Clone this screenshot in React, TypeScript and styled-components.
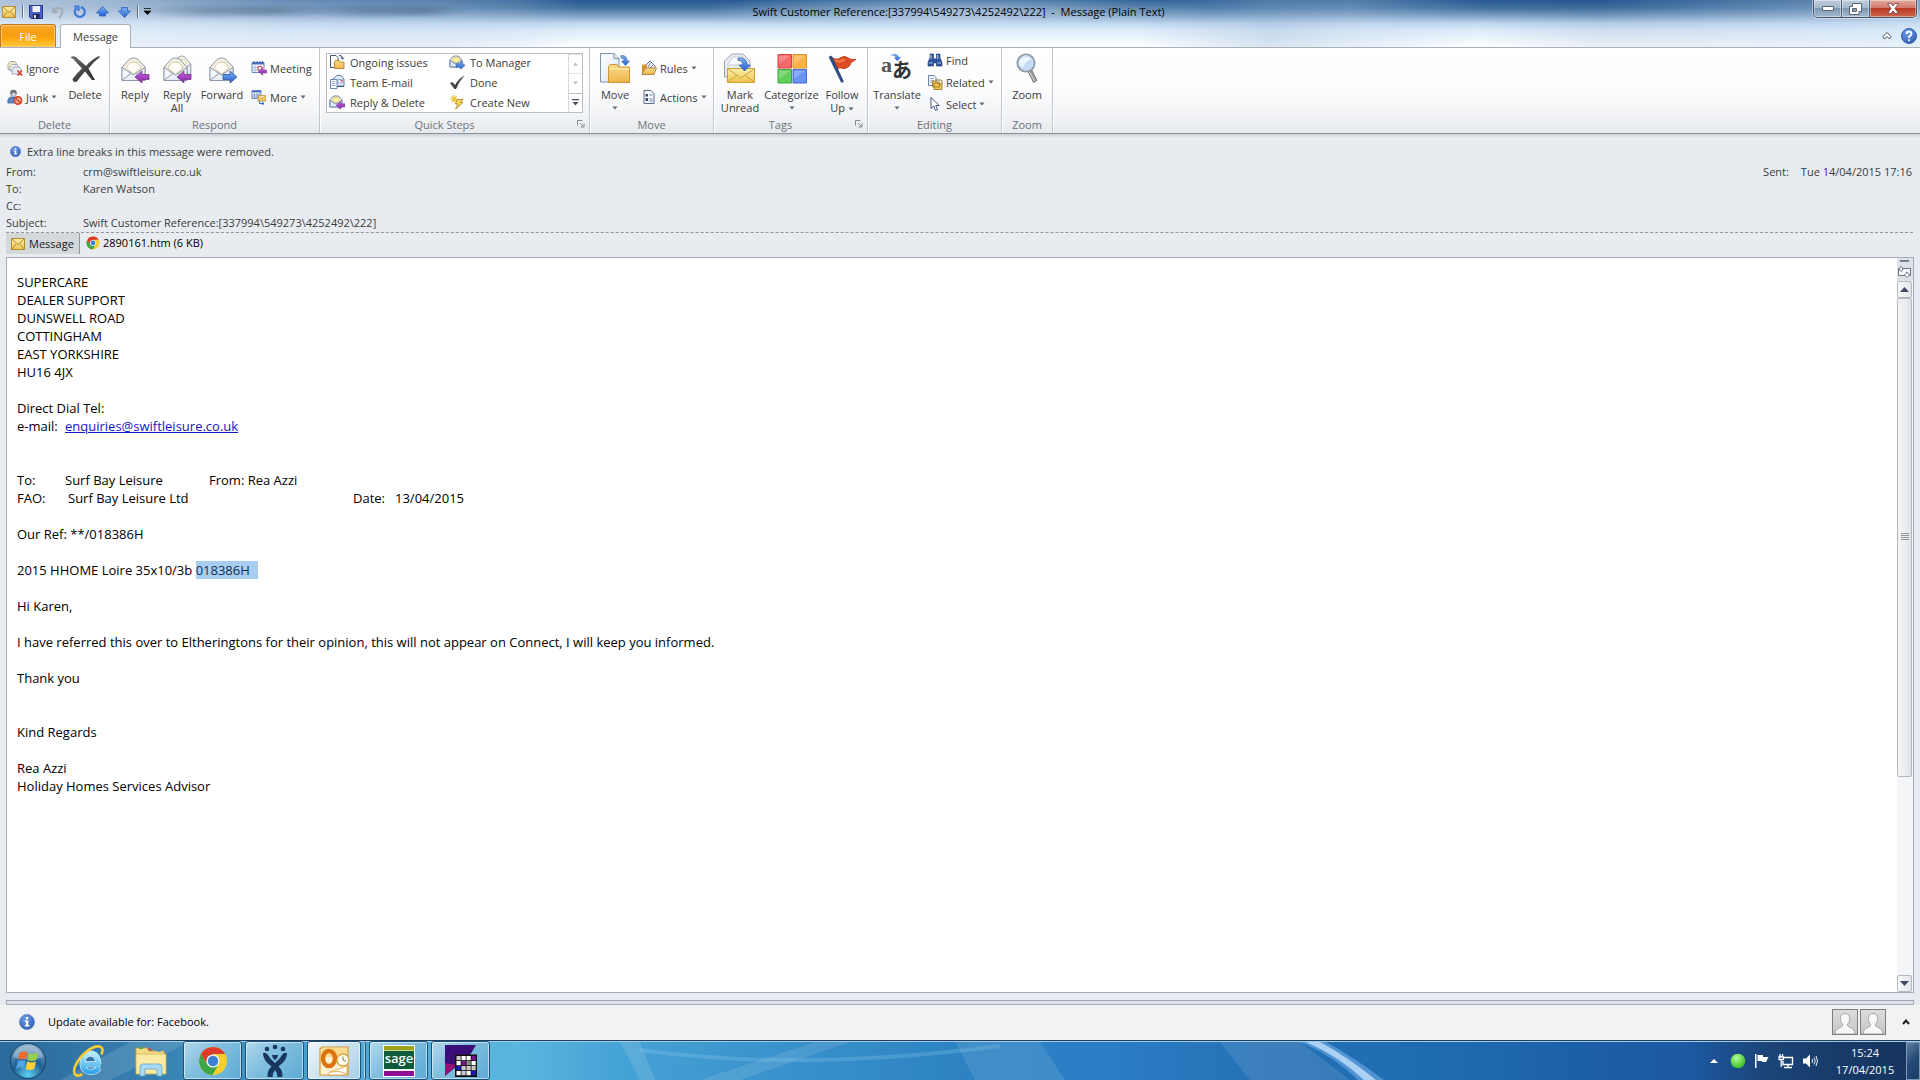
import React from "react";
import styled, { createGlobalStyle } from "styled-components";

const ui = `"Open Sans", "Noto Sans", sans-serif`;

const GlobalStyle = createGlobalStyle`
  *, *::before, *::after { box-sizing: border-box; }
  html, body { margin: 0; padding: 0; background: #e8ecf1; }
  body { font-family: ${ui}; font-size: 11px; line-height: 13px; color: #3b3b3b; }
  button { font: inherit; color: inherit; background: none; border: 0; padding: 0; margin: 0; }
  svg { display: block; flex: none; }
`;

const Screen = styled.div`
  min-height: 100vh;
  display: flex;
  flex-direction: column;
`;

/* ---------- window frame ---------- */

const Frame = styled.header`
  background:
    radial-gradient(ellipse 75px 8px at 215px 11px, rgba(70, 96, 126, 0.4), transparent),
    radial-gradient(ellipse 60px 7px at 275px 11px, rgba(70, 96, 126, 0.4), transparent),
    radial-gradient(ellipse 75px 8px at 375px 11px, rgba(60, 88, 120, 0.4), transparent),
    radial-gradient(ellipse 45px 7px at 425px 11px, rgba(60, 88, 120, 0.35), transparent),
    radial-gradient(ellipse 260px 20px at 958px 11px, rgba(214, 230, 246, 0.6), transparent),
    linear-gradient(90deg, rgba(226, 236, 247, 0.72), rgba(222, 233, 245, 0.62) 120px, rgba(200, 218, 238, 0.4) 280px, rgba(190, 210, 232, 0.32) 450px, rgba(190, 210, 232, 0.2) 520px, transparent 580px, transparent 1140px, rgba(150, 180, 212, 0.35) 1270px, rgba(180, 205, 230, 0.3) 1350px, transparent 1480px, rgba(20, 60, 110, 0.08) 1600px, rgba(200, 220, 240, 0.35) 1840px, rgba(210, 228, 245, 0.5)),
    linear-gradient(180deg, #285a92 0, #42709f 8px, #7fa1c6 16px, #bdd5ee 23px, #dcebfa 30px, #f4f9fe 42px, #ffffff 47px);
`;

const TitleBar = styled.div`
  display: grid;
  grid-template-columns: 1fr auto 1fr;
  height: 24px;
  padding-right: 3px;
`;

const QuickAccess = styled.div`
  display: flex;
  align-items: center;
  gap: 8px;
  padding-left: 2px;
  height: 23px;
`;

const QuickButton = styled.button`
  display: flex;
  align-items: center;
  justify-content: center;
  width: 14px;
  height: 16px;
`;

const Separator = styled.span`
  width: 1px;
  height: 13px;
  margin: 0 -2px;
  background: #5f7183;
  box-shadow: 1px 0 #ffffffaa;
`;

const Title = styled.h1`
  margin: 0;
  font-size: 11px;
  font-weight: 400;
  line-height: 23px;
  color: #000;
  white-space: pre;
`;

const WindowControls = styled.div`
  display: flex;
  justify-self: end;
  height: 18px;
  border: 1px solid #43566c;
  border-top: 0;
  border-radius: 0 0 5px 5px;
  box-shadow: 0 0 0 1px #ffffff70;
  overflow: hidden;
`;

const ControlButton = styled.button<{ $close?: boolean }>`
  display: flex;
  align-items: center;
  justify-content: center;
  width: ${(p) => (p.$close ? 46 : 28)}px;
  border-right: ${(p) => (p.$close ? 0 : 1)}px solid #4c6178;
  box-shadow: inset 0 0 0 1px #ffffff66;
  background: ${(p) =>
    p.$close
      ? "linear-gradient(#e3aba0 0, #d4786a 45%, #bb3a22 50%, #d0664e 100%)"
      : "linear-gradient(#c0cfdf 0, #a3b8cd 45%, #7e98b2 50%, #a5bacf 100%)"};
`;

const TabRow = styled.nav`
  display: flex;
  align-items: flex-end;
  gap: 4px;
  height: 24px;
  border-bottom: 1px solid #aab0b8;
`;

const FileTab = styled.button`
  width: 56px;
  height: 23px;
  border: 1px solid #c8741a;
  border-bottom: 0;
  border-radius: 3px 3px 0 0;
  background: linear-gradient(#f9a92e 0, #f79d10 40%, #fba60d 60%, #ffca3c 100%);
  box-shadow: inset 0 0 0 1px #ffcb6e;
  color: #fff;
`;

const MessageTab = styled.button`
  width: 71px;
  height: 24px;
  margin-bottom: -1px;
  border: 1px solid #aab0b8;
  border-bottom: 0;
  border-radius: 3px 3px 0 0;
  background: #fff;
`;

const TabTools = styled.div`
  display: flex;
  align-items: center;
  gap: 9px;
  height: 23px;
  margin-left: auto;
  padding-right: 3px;
`;

/* ---------- ribbon ---------- */

const Ribbon = styled.section`
  display: flex;
  height: 86px;
  background: linear-gradient(#ffffff 0, #fdfdfe 45%, #f1f3f5 80%, #e7eaee 100%);
  border-bottom: 1px solid #8b9097;
`;

const Group = styled.div<{ $width: number }>`
  display: flex;
  flex-direction: column;
  width: ${(p) => p.$width}px;
  border-right: 1px solid #c3c8ce;
  box-shadow: 1px 0 #ffffff;
`;

const GroupBody = styled.div`
  display: flex;
  flex: 1;
  gap: 2px;
  padding: 3px 0 0 4px;
`;

const LargeSet = styled.div`
  display: flex;
`;

const GroupLabel = styled.div`
  display: flex;
  align-items: center;
  height: 16px;
  margin-bottom: 1px;
  color: #6d747c;
`;

const GroupName = styled.span`
  flex: 1;
  text-align: center;
`;

const LauncherButton = styled.button`
  margin: 0 4px 0 8px;
`;

const LargeButton = styled.button<{ $width: number }>`
  display: flex;
  flex-direction: column;
  align-items: center;
  width: ${(p) => p.$width}px;
  padding-top: 1px;
  white-space: nowrap;
`;

const LargeText = styled.span`
  display: block;
  height: 26px;
  margin-top: 4px;
  text-align: center;
`;

const SmallColumn = styled.div<{ $tight?: boolean }>`
  display: flex;
  flex-direction: column;
  gap: ${(p) => (p.$tight ? 4 : 11)}px;
  padding-top: ${(p) => (p.$tight ? 0 : 8)}px;
  min-width: 60px;
`;

const SmallButton = styled.button`
  display: flex;
  align-items: center;
  gap: 3px;
  height: 18px;
  padding-left: 3px;
  white-space: nowrap;
`;

const Gallery = styled.div`
  display: flex;
  width: 257px;
  height: 60px;
  margin: 2px 0 0 2px;
  border: 1px solid #b9bec4;
  background: #fff;
`;

const GalleryGrid = styled.div`
  display: grid;
  grid-template-columns: 120px 1fr;
  grid-template-rows: repeat(3, 20px);
  flex: 1;
  height: 58px;
`;

const GalleryButton = styled.button`
  display: flex;
  align-items: center;
  gap: 5px;
  padding-left: 2px;
  height: 16px;
  white-space: nowrap;
`;

const GalleryScroll = styled.div`
  display: flex;
  flex-direction: column;
  width: 14px;
  border-left: 1px solid #d5d9dd;
`;

const GalleryArrow = styled.button<{ $active?: boolean }>`
  display: flex;
  flex: 1;
  align-items: center;
  justify-content: center;
  color: ${(p) => (p.$active ? "#4b5158" : "#b8bcc1")};
  border-top: 1px solid ${(p) => (p.$active ? "#b9bec4" : "#e4e6e9")};
`;

/* ---------- message header ---------- */

const MessagePane = styled.main`
  display: flex;
  flex: 1;
  flex-direction: column;
  padding: 0 6px;
  background: linear-gradient(#cdd2d8 0, #e8ecf1 4px);
`;

const InfoLine = styled.p`
  display: flex;
  align-items: center;
  gap: 6px;
  height: 20px;
  margin: 7px 0 2px;
  padding-left: 4px;
`;

const HeaderRow = styled.div`
  display: flex;
  align-items: center;
  height: 17px;
`;

const HeaderName = styled.span`
  width: 77px;
`;

const SentInfo = styled.span`
  display: flex;
  gap: 12px;
  margin-left: auto;
  padding-right: 2px;
`;

const AttachmentBar = styled.div`
  display: flex;
  align-items: flex-start;
  height: 25px;
  margin: 1px 1px 0 0;
  border-top: 1px dashed #8e959d;
  color: #16181b;
`;

const MessageChip = styled.button`
  display: flex;
  align-items: center;
  gap: 4px;
  width: 74px;
  height: 21px;
  padding-left: 5px;
  border-right: 1px solid #8e959d;
  background: #d3d8db;
`;

const FileChip = styled.button`
  display: flex;
  align-items: center;
  gap: 3px;
  height: 19px;
  padding-left: 6px;
  color: #000;
`;

const Viewer = styled.section`
  display: flex;
  flex: 1;
  border: 1px solid #a3abb8;
  background: #fff;
`;

const Mail = styled.article`
  flex: 1;
  padding: 15px 10px 20px;
  font-size: 13px;
  line-height: 18px;
  color: #000;
`;

const Line = styled.p`
  display: flex;
  height: 18px;
  margin: 0;
  white-space: pre;
`;

const Cell = styled.span<{ $width: number }>`
  width: ${(p) => p.$width}px;
`;

const MailLink = styled.a`
  color: #1414c8;
  text-decoration: underline;
`;

const Selected = styled.mark`
  height: 18px;
  padding-right: 8px;
  background: #a9cdf1;
  color: #12304f;
`;

const ScrollBar = styled.div`
  display: flex;
  flex-direction: column;
  width: 16px;
  background: #f4f5f6;
`;

const ScrollTools = styled.div`
  display: flex;
  flex-direction: column;
  align-items: center;
  gap: 4px;
  height: 23px;
  padding: 2px 1px 0 0;
  background: #dde2e8;
`;

const SplitHandle = styled.span`
  width: 9px;
  height: 2px;
  background: #77808a;
`;

const ScrollButton = styled.button`
  display: flex;
  align-items: center;
  justify-content: center;
  width: 15px;
  height: 17px;
  border: 1px solid #b4b9c0;
  border-radius: 2px;
  background: linear-gradient(90deg, #f8f9fa, #e4e7ea);
`;

const ScrollTrack = styled.div`
  display: flex;
  flex: 1;
  flex-direction: column;
`;

const ScrollThumb = styled.div`
  display: flex;
  flex: 478;
  align-items: center;
  justify-content: center;
  width: 15px;
  border: 1px solid #b4b9c0;
  border-radius: 2px;
  background: linear-gradient(90deg, #f3f3f3, #eeeeee 50%, #dfe2e5);
`;

const ScrollRest = styled.div`
  flex: 199;
`;

const PeopleSplitter = styled.div`
  height: 5px;
  margin-top: 7px;
  border: 1px solid #a3abb8;
  background: #dfe3e9;
`;

const StatusBar = styled.footer`
  display: flex;
  align-items: center;
  height: 35px;
  padding: 0 10px 2px 19px;
  background: #f0f2f4;
  color: #000;
`;

const StatusText = styled.span`
  margin-left: 13px;
`;

const People = styled.div`
  display: flex;
  align-items: center;
  gap: 2px;
  margin-left: auto;
`;

const Avatar = styled.button`
  width: 26px;
  height: 26px;
  border: 1px solid #7d7d7d;
  background: linear-gradient(#dcdcdc, #c6c6c6);
`;

const ExpandButton = styled.button`
  margin-left: 14px;
`;

/* ---------- taskbar ---------- */

const Taskbar = styled.footer`
  position: relative;
  display: flex;
  height: 40px;
  border-top: 1px solid #1d3f60;
  background: linear-gradient(90deg, #2b6a9b 0, #3680b0 8%, #4aa5d2 17%, #5ab5df 27%, #46a3d5 32%, #3a93cc 40%, #2d83c2 50%, #2a7cc4 58%, #2571b5 66%, #1f6bb2 75%, #1c5fa6 83%, #1c59a2 88%, #1c4478 92%, #173a68 96%, #16335c 100%);
  box-shadow: inset 0 1px #a5cce6;
`;

const Wallpaper = styled.svg`
  position: absolute;
  inset: 1px 0 0 0;
  width: 100%;
  height: 38px;
`;

const Launchers = styled.nav`
  position: relative;
  display: flex;
  gap: 3px;
`;

const Launcher = styled.button<{ $open?: boolean; $active?: boolean }>`
  display: flex;
  align-items: center;
  justify-content: center;
  width: 59px;
  height: 39px;
  border-radius: 3px;
  border: 1px solid ${(p) => (p.$open ? "#1e4f75" : "transparent")};
  box-shadow: ${(p) => (p.$open ? "inset 0 0 0 1px #ffffff88" : "none")};
  background: ${(p) =>
    p.$active
      ? "linear-gradient(135deg, #f2f8fc 0, #cfe4f1 45%, #a5cfe8 100%)"
      : p.$open
        ? "linear-gradient(135deg, #b4d9ec 0, #83bfdf 40%, #5cabd6 100%)"
        : "none"};
`;

const StartButton = styled(Launcher)`
  width: 56px;
`;

const Stack = styled.div`
  display: flex;
  width: 59px;
  border-right: 1px solid #1e4f75;
  border-radius: 3px;
  box-shadow: inset -1px 0 #ffffff88;

  ${Launcher} { width: 54px; }
`;

const Tray = styled.div`
  position: relative;
  display: flex;
  align-items: center;
  gap: 8px;
  margin-left: auto;
`;

const TrayButton = styled.button`
  display: flex;
  align-items: center;
  justify-content: center;
  width: 16px;
  height: 18px;
`;

const Clock = styled.time`
  width: 66px;
  margin-left: 6px;
  text-align: center;
  line-height: 17px;
  color: #fff;
`;

const ShowDesktop = styled.button`
  width: 14px;
  height: 38px;
  border: 1px solid #7d99b8;
  background: linear-gradient(135deg, #5f7d9e, #234a75 50%, #1c3e68);
`;

/* ---------- drawings ---------- */

const Defs = styled.svg`
  position: absolute;
  width: 0;
  height: 0;
`;

const Gradients = () => (
  <Defs aria-hidden="true">
    <defs>
      <linearGradient id="paper" x1="0" y1="0" x2="1" y2="1">
        <stop offset="0" stopColor="#ffffff" /><stop offset="1" stopColor="#dbe5f1" />
      </linearGradient>
      <linearGradient id="flap" x1="0" y1="0" x2="0" y2="1">
        <stop offset="0" stopColor="#f4f1e4" /><stop offset="1" stopColor="#e3e0d0" />
      </linearGradient>
      <linearGradient id="gold" x1="0" y1="0" x2="0" y2="1">
        <stop offset="0" stopColor="#fdf0a8" /><stop offset="1" stopColor="#eec14e" />
      </linearGradient>
      <linearGradient id="folder" x1="0" y1="0" x2="0" y2="1">
        <stop offset="0" stopColor="#fbdc8c" /><stop offset="1" stopColor="#eeb54a" />
      </linearGradient>
      <linearGradient id="blue" x1="0" y1="0" x2="0" y2="1">
        <stop offset="0" stopColor="#7db0f2" /><stop offset="1" stopColor="#2761cf" />
      </linearGradient>
      <linearGradient id="purple" x1="0" y1="0" x2="0" y2="1">
        <stop offset="0" stopColor="#c36ad8" /><stop offset="1" stopColor="#8a1fa8" />
      </linearGradient>
      <linearGradient id="ink" x1="0" y1="0" x2="1" y2="1">
        <stop offset="0" stopColor="#6a6a6a" /><stop offset="1" stopColor="#222222" />
      </linearGradient>
      <radialGradient id="info" cx="0.4" cy="0.3" r="0.8">
        <stop offset="0" stopColor="#6fa0ea" /><stop offset="1" stopColor="#2a57b0" />
      </radialGradient>
      <radialGradient id="orb" cx="0.5" cy="0.9" r="0.9">
        <stop offset="0" stopColor="#5fd0f5" /><stop offset="0.5" stopColor="#1e5e92" /><stop offset="1" stopColor="#8fb4cf" />
      </radialGradient>
      <radialGradient id="green" cx="0.4" cy="0.3" r="0.7">
        <stop offset="0" stopColor="#b5ff9a" /><stop offset="1" stopColor="#35bd1c" />
      </radialGradient>
      <linearGradient id="ie" x1="0" y1="0" x2="0" y2="1">
        <stop offset="0" stopColor="#b8ecfd" /><stop offset="1" stopColor="#35a6e8" />
      </linearGradient>
    </defs>
  </Defs>
);

const Caret = () => (
  <svg width="6" height="4" viewBox="0 0 6 4"><path d="M0.5 0.5h5L3 3.5z" fill="#63686e" /></svg>
);

const InlineCaretBox = styled.span`
  display: inline-block;
  vertical-align: middle;
  margin-left: 3px;
`;

const CaretLine = styled.span`
  display: flex;
  align-items: center;
  justify-content: center;
  height: 13px;
`;

const EnvelopeShape = () => (
  <g stroke="#8d98a8" strokeWidth="1" strokeLinejoin="round">
    <path d="M1 10 8 2.500Q12.500-.8 17 2.500L24 10V23.500H1z" fill="url(#flap)" />
    <path d="M5 11 9 5.500h7L20 11l-7.500 6z" fill="#fffef6" stroke="#d5cfae" />
    <path d="M1 10.500 12.500 18 24 10.500V23.500H1z" fill="url(#paper)" />
    <path d="M1.500 23 10 16.500M23.500 23 15 16.500" fill="none" />
  </g>
);

const ArrowLeft = () => <path d="M0 6 7 0v3.500h7v5H7V12z" fill="url(#purple)" stroke="#6f2787" strokeWidth=".7" />;
const ArrowRight = () => <path d="M14 6 7 0v3.500H0v5h7V12z" fill="url(#blue)" stroke="#20509f" strokeWidth=".7" />;

const ReplyIcon = () => (
  <svg width="32" height="32" viewBox="0 0 32 32">
    <g transform="translate(2 5)"><EnvelopeShape /></g>
    <g transform="translate(16 19)"><ArrowLeft /></g>
  </svg>
);

const ReplyAllIcon = () => (
  <svg width="32" height="32" viewBox="0 0 32 32">
    <g transform="translate(11 3) scale(.78 .9)"><EnvelopeShape /></g>
    <g transform="translate(2 5)"><EnvelopeShape /></g>
    <g transform="translate(16 19)"><ArrowLeft /></g>
  </svg>
);

const ForwardIcon = () => (
  <svg width="32" height="32" viewBox="0 0 32 32">
    <g transform="translate(3 5)"><EnvelopeShape /></g>
    <g transform="translate(17 19)"><ArrowRight /></g>
  </svg>
);

const DeleteIcon = () => (
  <svg width="32" height="32" viewBox="0 0 32 32">
    <path d="M2 5Q6 3 9 7L17 14Q23 7 30 4L31 5Q24 10 19.500 16.500L26 28H23L16 19.500Q11 25 8 29.500Q4 31 3.500 27Q8 21 13 16.500L6 9Q5 6.500 2 6z" fill="url(#ink)" />
  </svg>
);

const MoveIcon = () => (
  <svg width="32" height="32" viewBox="0 0 32 32">
    <path d="M1.500 1.500H15l5 5V30H1.500z" fill="url(#paper)" stroke="#7d93b3" />
    <path d="M15 1.500v5h5" fill="#e5ecf5" stroke="#7d93b3" />
    <path d="M22 3.500Q28 3 28 9h2.500L26.500 13.500 22.500 9H25Q25.500 6 22 6z" fill="url(#blue)" stroke="#2b5aa8" strokeWidth=".6" />
    <path d="M9.500 14.500 11 12.500h7l1.500 2.500H30.500V30.500H9.500z" fill="url(#folder)" stroke="#d09436" />
    <path d="M10 17h20" stroke="#fff0be" />
  </svg>
);

const MarkUnreadIcon = () => (
  <svg width="32" height="32" viewBox="0 0 32 32">
    <path d="M.5 13V9L8 2h11l7 7v8H.5z" fill="#e9edf1" stroke="#9aa3b0" />
    <path d="M.5 12v13h5" fill="#dfe6ee" stroke="#9aa3b0" />
    <path d="M3 13 9 5h10l5 8z" fill="#fafbfc" stroke="#c5cbd3" />
    <path d="M3.500 16.500h27v14h-27z" fill="url(#gold)" stroke="#c9a23c" />
    <path d="M4 17 17 26 30 17M4 30l9-7M30 30l-9-7" fill="none" stroke="#c9a23c" />
    <path d="M14 6Q23 5 23 13h3.500L20.500 19 15 13H18.500Q19 8.500 14 8.500z" fill="url(#blue)" stroke="#2b5aa8" strokeWidth=".7" />
  </svg>
);

const CategorizeIcon = () => (
  <svg width="32" height="32" viewBox="0 0 32 32">
    <path d="M2 2.500h13.500V16H2z" fill="#f4686a" stroke="#d94042" />
    <path d="M17 2.500h13.500V16H17z" fill="#fbb347" stroke="#e0922a" />
    <path d="M2 17.500h13.500V31H2z" fill="#62cf5b" stroke="#3aa838" />
    <path d="M17 17.500h13.500V31H17z" fill="#6a94f5" stroke="#3e68d0" />
    <path d="M3 3.500h11.500L3 12zM18 3.500h11.500L18 12zM3 18.500h11.500L3 27zM18 18.500h11.500L18 27z" fill="#fff" opacity=".22" />
  </svg>
);

const FlagIcon = () => (
  <svg width="32" height="32" viewBox="0 0 32 32">
    <path d="M5 5Q10 9 15 5.500Q19 3 22 6Q25 8 30 7.500Q24 10 23.500 14Q19 18 15 16Q12 15 11.500 19z" fill="#e04a24" stroke="#b52f12" strokeWidth=".8" />
    <path d="M8 7Q13 10 17 6.500L20 8Q15 12 10 10z" fill="#f58b5c" opacity=".7" />
    <path d="M3 5 15.500 30.500 17.500 29.500 5.500 4z" fill="#2c4d8a" stroke="#1d3564" strokeWidth=".6" />
  </svg>
);

const TranslateIcon = () => (
  <svg width="32" height="32" viewBox="0 0 32 32">
    <text x="0" y="20" fontFamily="Liberation Serif, serif" fontWeight="700" fontSize="22" fill="#555">a</text>
    <text x="11" y="26" fontFamily="Noto Sans CJK JP, sans-serif" fontWeight="700" fontSize="20" fill="#333">あ</text>
    <path d="M9 4Q15-1 18 5h2L16.500 9 12.500 5.500h2.500Q13 2.500 9 4z" fill="url(#blue)" />
  </svg>
);

const ZoomIcon = () => (
  <svg width="32" height="32" viewBox="0 0 32 32">
    <path d="M16.500 18.500 20 16.500 26 28.500 22.500 30.500z" fill="#9a9a9a" stroke="#707070" strokeWidth=".8" />
    <path d="M18 19 23.500 29" stroke="#dcdcdc" strokeWidth="1" />
    <circle cx="15" cy="11" r="8.700" fill="#c5dbf3" stroke="#8c97a5" strokeWidth="1.600" />
    <path d="M8.500 11a6.500 6.500 0 0 1 12-3.500Q15 8 12 15.500 8.500 14 8.500 11z" fill="#eef6fd" />
  </svg>
);

const SmallEnvelope = () => (
  <g strokeLinejoin="round">
    <path d="M1 6 4.500 2h5L13 6v7H1z" fill="#f4edc8" stroke="#5c7fae" strokeWidth=".9" />
    <path d="M3.500 6 5 3.500h4L10.500 6 7 8.500z" fill="#fff4a8" stroke="#d8b850" strokeWidth=".6" />
    <path d="M1 6.500 7 10 13 6.500V13H1z" fill="#dce9f8" stroke="#5c7fae" strokeWidth=".9" />
  </g>
);

const S = ({ children }: { children: React.ReactNode }) => (
  <svg width="16" height="16" viewBox="0 0 16 16">{children}</svg>
);

const IgnoreIcon = () => (
  <S>
    <path d="M1 4.500 3 1.500h5l2 3v5H1z" fill="#f6ecc0" stroke="#8f99a8" strokeWidth=".8" />
    <path d="M3 7 5 4.500h5l2 2.500v4H3z" fill="#f0f2f5" stroke="#8f99a8" strokeWidth=".8" />
    <path d="M5 9 7 7h5l2 2v5H5z" fill="#e6ebf2" stroke="#8f99a8" strokeWidth=".8" />
    <path d="M10.500 10.500 15 15.500M15 10.500l-4.500 5" stroke="#dc4030" strokeWidth="1.700" />
  </S>
);
const JunkIcon = () => (
  <S>
    <circle cx="6.500" cy="4" r="3.300" fill="#6a6f78" />
    <path d="M4.500 5Q7 2 9 5.500Q8 8 6.500 8 5 8 4.500 5z" fill="#cfd5de" />
    <path d="M.8 14Q.500 8.500 4 8h5Q11 9 11 14z" fill="#5c86c4" stroke="#31568f" strokeWidth=".7" />
    <circle cx="11" cy="11.500" r="3.600" fill="#f3b7a4" stroke="#dc4322" strokeWidth="1.700" />
    <path d="M8.600 9 13.400 14" stroke="#dc4322" strokeWidth="1.600" />
  </S>
);
const MeetingIcon = () => (
  <S>
    <path d="M1 2.500h12v10H1z" fill="#fff" stroke="#6b87c0" />
    <path d="M1 2.500h12v2H1z" fill="#4c74c8" />
    <path d="M3 1v2.500M6 1v2.500M9 1v2.500M11.500 1v2.500" stroke="#36559b" />
    <path d="M4 5v7M7 5v7M10 5v7M1 7.500h12M1 10h12" stroke="#8fa8d8" strokeWidth=".8" />
    <path d="M7 6.500h3.500V10H7z" fill="#fff" stroke="#d84a4a" />
    <g transform="translate(7.500 8) scale(.6)"><ArrowLeft /></g>
  </S>
);
const MoreIcon = () => (
  <S>
    <path d="M1 1.500h9v8H1z" fill="#fff" stroke="#6b87c0" />
    <path d="M1 1.500h9v2H1z" fill="#4c74c8" />
    <path d="M3.500 4v6M6 4v6M8 4v6M1 6h9M1 8h9" stroke="#6f8ecb" strokeWidth=".8" />
    <path d="M7 6.500h7.500v5.500H7z" fill="url(#gold)" stroke="#bd933a" strokeWidth=".8" />
    <path d="M7 7 10.800 10 14.500 7" fill="none" stroke="#bd933a" strokeWidth=".8" />
    <path d="M8.500 12v2.500h4M11 13l2 1.500-2 1.500" fill="none" stroke="#2f66c4" />
  </S>
);
const FolderMoveIcon = () => (
  <S>
    <path d="M1.500 1.500H7l2 2v10H1.500z" fill="#fff" stroke="#46536b" />
    <path d="M10 1.500Q13.500 1 13.500 4.500M12 3.500l1.500 1.800L15 3.500" fill="none" stroke="#2b3c5e" />
    <path d="M5.500 8 6.500 6.500H10L11 8h4v6.500H5.500z" fill="url(#folder)" stroke="#b8862a" strokeWidth=".9" />
  </S>
);
const TeamMailIcon = () => (
  <S>
    <path d="M4 5 8 1.500h4L15 5v7H4z" fill="#e3edf9" stroke="#4d6fa6" strokeWidth=".9" />
    <path d="M9 5.500h4.500V9H9z" fill="#fff" stroke="#7089b5" strokeWidth=".7" />
    <path d="M11.500 6h1.500v1.500h-1.500z" fill="#d84040" />
    <path d="M1.500 5.500H8v9H1.500z" fill="#fff" stroke="#5878ac" strokeWidth=".9" />
    <path d="M2.500 7.500h4M2.500 9.500h4M2.500 11.500h4" stroke="#88a4cf" strokeWidth=".9" />
    <path d="M8 12.500h7" stroke="#39598f" />
  </S>
);
const ReplyDeleteIcon = () => (
  <S><SmallEnvelope /><g transform="translate(7 7.500) scale(.65)"><ArrowLeft /></g></S>
);
const ToManagerIcon = () => (
  <S><SmallEnvelope /><g transform="translate(7 7.500) scale(.65)"><ArrowRight /></g></S>
);
const DoneIcon = () => (
  <S><path d="M.8 9 3.500 8 6 11Q9.500 4.500 15.500 1.500Q10 7.500 7 15H5.500z" fill="url(#ink)" /></S>
);
const CreateNewIcon = () => (
  <S>
    <path d="M5 1v8M1 5h8M2.200 2.200l5.600 5.600M7.800 2.200 2.200 7.800" stroke="#eac43c" strokeWidth="1.200" />
    <path d="M8 5.500h6L11.500 8.500H14L6.500 15 9 10H6.500z" fill="#f8d652" stroke="#a98221" strokeWidth=".8" />
  </S>
);
const RulesIcon = () => (
  <S>
    <path d="M4 6 9 1l5 5v5H4z" fill="#eef3fa" stroke="#4f6795" strokeWidth=".9" />
    <path d="M7 7 9.500 3M9 8l3-3" stroke="#7a5fa8" strokeWidth=".9" />
    <path d="M1 4.500h4l1 1.500v2h8v6H1z" fill="#d9972d" />
    <path d="M1 14.500 4 8h11.500L13 14.500z" fill="url(#folder)" stroke="#a87420" strokeWidth=".8" />
  </S>
);
const ActionsIcon = () => (
  <S>
    <path d="M3 1.500h7l3 3v10H3z" fill="#f4f7fb" stroke="#5a6f93" />
    <path d="M4.500 5h2.500v2.500H4.500zM4.500 9h2.500v3H4.500z" fill="#3e4c66" />
    <path d="M8.500 6h3M8.500 10h3M8.500 12h3" stroke="#6f83a6" />
  </S>
);
const FindIcon = () => (
  <S>
    <path d="M3 2h3.500v3L7 7h2l.5-2V2H13v3.500l2 5V14H9.500v-3h-3v3H1v-3.500l2-5z" fill="#2f549c" stroke="#1c3668" strokeWidth=".6" />
    <path d="M2 11h3.500M10.500 11H14M4 3v4M10.800 3v4" stroke="#a9c3ee" strokeWidth="1.200" />
  </S>
);
const RelatedIcon = () => (
  <S>
    <path d="M1.500 1.500H7l2 2v8H1.500z" fill="#f2f6fb" stroke="#54709f" strokeWidth=".9" />
    <path d="M3 4.500h4M3 6.500h4M3 8.500h4" stroke="#8aa2c8" strokeWidth=".8" />
    <path d="M5.500 7h3l1 1h3v5h-7zM7 9h3l1 1h4v5.500H7z" fill="#f4c657" stroke="#96701d" strokeWidth=".8" />
    <path d="M9 6h5l1 1v3" fill="none" stroke="#96701d" />
  </S>
);
const SelectIcon = () => (
  <S><path d="M4 1.500v11l2.700-2.500L8.500 14.500l2-.8-1.800-4.200h3.600z" fill="#fff" stroke="#44567d" strokeWidth="1" /></S>
);

const MailGlyph = () => (
  <svg width="14" height="12" viewBox="0 0 14 12">
    <path d="M.5.5h13v11H.5z" fill="url(#gold)" stroke="#b78a2e" />
    <path d="M1 1 7 6.500 13 1M1 11l4-5M13 11 9 6" fill="none" stroke="#b78a2e" />
  </svg>
);

const InfoGlyph = ({ size }: { size: number }) => (
  <svg width={size} height={size} viewBox="0 0 16 16">
    <circle cx="8" cy="8" r="7.500" fill="url(#info)" stroke="#5579bd" strokeWidth=".7" />
    <path d="M7 3h2.200v2.200H7zM6 6.500h3.200V11H10.500v1.500H5.800V11H7V8H6z" fill="#fff" />
  </svg>
);

const ChromeGlyph = ({ size }: { size: number }) => (
  <svg width={size} height={size} viewBox="0 0 30 30">
    <circle cx="15" cy="15" r="14" fill="#f9cf2f" />
    <path d="M2.900 8A14 14 0 0 0 14.500 29L20.600 18.300 9.400 18.200z" fill="#3fa648" />
    <path d="M2.900 8A14 14 0 0 1 27.200 8H15L9.400 18.200z" fill="#dc3b2d" />
    <circle cx="15" cy="15" r="6.600" fill="#f2f5f8" />
    <circle cx="15" cy="15" r="5.200" fill="#3f7fd2" />
  </svg>
);

const Person = () => (
  <svg width="24" height="24" viewBox="0 0 24 24">
    <path d="M12 3.500c3 0 4.700 2 4.700 5 0 2.400-1 4.500-2.200 5.500v1.500c0 2 7 1.500 7.500 8.500H2c.5-7 7.500-6.500 7.500-8.500V14C8.300 13 7.300 10.900 7.300 8.500c0-3 1.700-5 4.700-5z" fill="#f8f8f8" stroke="#a5a5a5" />
  </svg>
);

const StartOrb = () => (
  <svg width="38" height="38" viewBox="0 0 38 38">
    <circle cx="19" cy="19" r="17.500" fill="url(#orb)" stroke="#1b3d5c" />
    <path d="M4 15A15.500 15.500 0 0 1 34 15Q19 21 4 15z" fill="#fff" opacity=".3" />
    <path d="M10.500 11Q14.500 8.500 18.500 10.500L17 17.500Q13 15.500 9 18z" fill="#ef6b2b" />
    <path d="M20 11Q24 13 29 10.500L27.300 18Q23 20 18.500 18z" fill="#9bcf44" />
    <path d="M8.700 19.500Q12.500 17.300 16.700 19L15 26.500Q11 24.500 7 27z" fill="#4fa5e3" />
    <path d="M18.200 19.500Q22.500 21.500 27 19.500L25.300 27Q21 29 16.500 27z" fill="#fbcd3b" />
  </svg>
);

const IeGlyph = () => (
  <svg width="34" height="34" viewBox="0 0 34 34">
    <path d="M28.500 20.300H12.500M26.300 20C26 12.500 22.500 9.500 18.500 9.500 13.500 9.500 10.500 13.500 10.500 19 10.500 25 14 28 19 28 22.800 28 25.200 26.500 26.800 23.800" fill="none" stroke="#dff5ff" strokeWidth="6" />
    <path d="M28.500 20.300H12.500M26.300 20C26 12.500 22.500 9.500 18.500 9.500 13.500 9.500 10.500 13.500 10.500 19 10.500 25 14 28 19 28 22.800 28 25.200 26.500 26.800 23.800" fill="none" stroke="url(#ie)" strokeWidth="4.800" />
    <path d="M9.500 30.500C3.500 33.500 0 30 3.500 21.500 8 11 20 1.500 27.500 2.500 30.800 3 31 6.500 29.800 9.500" fill="none" stroke="#f6cb33" strokeWidth="2.600" strokeLinecap="round" />
  </svg>
);

const ExplorerGlyph = () => (
  <svg width="34" height="32" viewBox="0 0 34 32">
    <path d="M2 3h11l2 3h15v6H2z" fill="#f3d983" stroke="#caa24b" strokeWidth=".8" />
    <path d="M5 2h4v2H5z" fill="#4cad47" /><path d="M14 3.500h4v2h-4z" fill="#d9503b" /><path d="M23 4.500h4v2h-4z" fill="#3a83d6" />
    <path d="M2 9h30v20H2z" fill="#fbe9a6" stroke="#d6b258" strokeWidth=".8" />
    <path d="M6 31V22Q6 19 9 19H25Q28 19 28 22V31H23V24H11V31z" fill="#a8daf3" stroke="#5fa6cf" strokeWidth=".8" />
  </svg>
);

const JiraGlyph = () => (
  <svg width="30" height="34" viewBox="0 0 30 34" fill="#17375e">
    <circle cx="7" cy="5" r="2.300" /><circle cx="15" cy="3" r="2.300" /><circle cx="23" cy="5" r="2.300" />
    <path d="M3 9Q6 8 8 11 10 15 15 19 20 15 22 11 24 8 27 9 27.500 16 18.500 22.500 23 26.500 22.500 33H17.500Q17.500 28.500 15 26 12.500 28.500 12.500 33H7.500Q7 26.500 11.500 22.500 2.500 16 3 9z" />
    <path d="M12 11h6Q18 14 15 16 12 14 12 11z" />
  </svg>
);

const OutlookGlyph = () => (
  <svg width="32" height="32" viewBox="0 0 32 32">
    <path d="M4 2H30V30H2V4z" fill="#fdf3d4" stroke="#d59a2c" strokeWidth="1.200" />
    <path d="M4 3H29V12H3z" fill="#f9cf6c" opacity=".7" />
    <ellipse cx="11" cy="13.500" rx="6" ry="7.500" fill="none" stroke="#dc7412" strokeWidth="4.500" />
    <path d="M12 27 29 21V30H10z" fill="#fff" stroke="#d59a2c" strokeWidth=".7" />
    <path d="M12 27Q21 25 29 29" fill="none" stroke="#d59a2c" strokeWidth=".8" />
    <circle cx="25" cy="15" r="6" fill="#fffdf4" stroke="#e0a33c" strokeWidth="1.300" />
    <path d="M25 11.500V15l3 1.500" fill="none" stroke="#8a7048" />
  </svg>
);

const SageGlyph = () => (
  <svg width="32" height="32" viewBox="0 0 32 32">
    <path d="M0 0h32v32H0z" fill="#fff" />
    <path d="M1 1h30v4.500H1z" fill="#9aa51c" />
    <path d="M1 6h30v18H1z" fill="#0b5b3c" />
    <path d="M1 26h30v5H1z" fill="#8d0f96" />
    <text x="16" y="18" textAnchor="middle" fontFamily="Open Sans, sans-serif" fontWeight="600" fontSize="13" fill="#fff">sage</text>
  </svg>
);

const calendarCells = ["#c8c8c8", "#fff", "#fff", "#7a1590", "#fff", "#7a1590", "#8a8a8a", "#fff", "#1a1ab8", "#c8c8c8", "#c8c8c8", "#c8c8c8", "#fff", "#c8c8c8", "#fff", "#1a1ab8"];

const GridGlyph = () => (
  <svg width="32" height="32" viewBox="0 0 32 32">
    <path d="M0 0H31L25 10 0 31z" fill="#3a0d78" />
    <path d="M0 18 12 20 0 31z" fill="#92106f" />
    <path d="M10 9.500h22V32H10z" fill="#111" />
    {calendarCells.map((c, i) => (
      <path key={i} d={`M${11.5 + (i % 4) * 5} ${11 + Math.floor(i / 4) * 5}h4.200v4.200h-4.200z`} fill={c} />
    ))}
  </svg>
);

const LauncherCorner = () => (
  <svg width="8" height="8" viewBox="0 0 8 8"><path d="M.5 5.500v-5h5M3 3l3.500 3.500M7 3.500V7H3.500" fill="none" stroke="#848b93" /></svg>
);

/* ---------- pieces ---------- */

type LargeProps = { icon: React.ReactNode; width: number; lines: string[]; caret?: "below" | "inline" };

const Large = ({ icon, width, lines, caret }: LargeProps) => (
  <LargeButton type="button" $width={width}>
    {icon}
    <LargeText>
      {lines.map((l, i) => (
        <React.Fragment key={l}>
          {i > 0 && <br />}
          {l}
        </React.Fragment>
      ))}
      {caret === "inline" && <InlineCaretBox><Caret /></InlineCaretBox>}
      {caret === "below" && <CaretLine><Caret /></CaretLine>}
    </LargeText>
  </LargeButton>
);

const Small = ({ icon, label, menu }: { icon: React.ReactNode; label: string; menu?: boolean }) => (
  <SmallButton type="button">
    {icon}
    <span>{label}</span>
    {menu && <Caret />}
  </SmallButton>
);

const RibbonGroup = ({ name, width, launcher, children }: { name: string; width: number; launcher?: boolean; children: React.ReactNode }) => (
  <Group $width={width}>
    <GroupBody>{children}</GroupBody>
    <GroupLabel>
      <GroupName>{name}</GroupName>
      {launcher && <LauncherButton type="button" aria-label={`${name} options`}><LauncherCorner /></LauncherButton>}
    </GroupLabel>
  </Group>
);

const quickSteps: [string, React.ReactNode][] = [
  ["Ongoing issues", <FolderMoveIcon />],
  ["To Manager", <ToManagerIcon />],
  ["Team E-mail", <TeamMailIcon />],
  ["Done", <DoneIcon />],
  ["Reply & Delete", <ReplyDeleteIcon />],
  ["Create New", <CreateNewIcon />],
];

const address = ["SUPERCARE", "DEALER SUPPORT", "DUNSWELL ROAD", "COTTINGHAM", "EAST YORKSHIRE", "HU16 4JX"];

export default function App() {
  return (
    <Screen>
      <GlobalStyle />
      <Gradients />

      <Frame>
        <TitleBar>
          <QuickAccess>
            <MailGlyph />
            <Separator />
            <QuickButton type="button" aria-label="Save">
              <svg width="14" height="14" viewBox="0 0 14 14">
                <path d="M.5.5h13v13H2L.500 12z" fill="#4a5fc4" stroke="#2b3a8c" />
                <path d="M3.500 1h7.500v6H3.500z" fill="#eef2fa" /><path d="M4 9h6.500v4.500H4z" fill="#1f2552" /><path d="M5 10h2v3H5z" fill="#e4e8f4" />
              </svg>
            </QuickButton>
            <QuickButton type="button" aria-label="Undo">
              <svg width="14" height="14" viewBox="0 0 14 14"><path d="M2 2v5h5M2.500 6.500Q6 1.500 10 3.500 13.500 6.500 8 13" fill="none" stroke="#a5adb7" strokeWidth="2.200" /></svg>
            </QuickButton>
            <QuickButton type="button" aria-label="Redo">
              <svg width="14" height="14" viewBox="0 0 14 14"><path d="M3.500 3A5 5 0 1 0 10.500 3.500M1 1.500h4.500V6M10.500 3.500 8 2" fill="none" stroke="#3d78d8" strokeWidth="2.200" /></svg>
            </QuickButton>
            <QuickButton type="button" aria-label="Previous item">
              <svg width="13" height="12" viewBox="0 0 13 12"><path d="M6.500.5 12.500 7H9.500v3h-6V7H.5z" fill="url(#blue)" stroke="#2b5fc0" strokeWidth=".8" /></svg>
            </QuickButton>
            <QuickButton type="button" aria-label="Next item">
              <svg width="13" height="12" viewBox="0 0 13 12"><path d="M6.500 11.500 12.500 5H9.500V1.500h-6V5H.5z" fill="url(#blue)" stroke="#2b5fc0" strokeWidth=".8" /></svg>
            </QuickButton>
            <Separator />
            <button type="button" aria-label="Customize toolbar">
              <svg width="7" height="7" viewBox="0 0 7 7"><path d="M0 .5h7M0 3h7L3.500 6.500z" stroke="#111" strokeWidth=".8" /></svg>
            </button>
          </QuickAccess>
          <Title>{"Swift Customer Reference:[337994\\549273\\4252492\\222]  -  Message (Plain Text)"}</Title>
          <WindowControls>
            <ControlButton type="button" aria-label="Minimize">
              <svg width="12" height="5" viewBox="0 0 12 5"><path d="M.5.5h11v4H.5z" fill="#fff" stroke="#5a6470" /></svg>
            </ControlButton>
            <ControlButton type="button" aria-label="Restore">
              <svg width="13" height="12" viewBox="0 0 13 12"><path d="M3.500.5h9v8h-2.500v3H.5v-8h3z" fill="#fff" stroke="#5a6470" /><path d="M3.500 5.500h4v3h-4z" fill="#8ba0b6" stroke="#5a6470" /></svg>
            </ControlButton>
            <ControlButton type="button" aria-label="Close" $close>
              <svg width="12" height="11" viewBox="0 0 12 11"><path d="M.5.5h3.500L6 3 8 .5h3.500L8 5.500l3.500 5H8L6 8l-2 2.500H.5L4 5.500z" fill="#fff" stroke="#6a3a38" strokeWidth=".8" /></svg>
            </ControlButton>
          </WindowControls>
        </TitleBar>
        <TabRow>
          <FileTab type="button">File</FileTab>
          <MessageTab type="button">Message</MessageTab>
          <TabTools>
            <button type="button" aria-label="Minimize the ribbon">
              <svg width="10" height="8" viewBox="0 0 10 8"><path d="M5 .5 9 4.500 7.500 7 5 4.500 2.500 7 1 4.500z" fill="#fff" stroke="#444b55" /></svg>
            </button>
            <button type="button" aria-label="Help">
              <svg width="16" height="16" viewBox="0 0 16 16"><circle cx="8" cy="8" r="7.500" fill="url(#info)" stroke="#3660b4" /><path d="M5.500 6Q5.500 3.500 8 3.500T10.500 6Q10.500 7.300 8 8.700V10M8 11.300v1.900" fill="none" stroke="#fff" strokeWidth="1.800" /></svg>
            </button>
          </TabTools>
        </TabRow>
      </Frame>

      <Ribbon>
        <RibbonGroup name="Delete" width={110}>
          <SmallColumn>
            <Small icon={<IgnoreIcon />} label="Ignore" />
            <Small icon={<JunkIcon />} label="Junk" menu />
          </SmallColumn>
          <Large icon={<DeleteIcon />} width={38} lines={["Delete"]} />
        </RibbonGroup>
        <RibbonGroup name="Respond" width={210}>
          <LargeSet>
            <Large icon={<ReplyIcon />} width={42} lines={["Reply"]} />
            <Large icon={<ReplyAllIcon />} width={42} lines={["Reply", "All"]} />
            <Large icon={<ForwardIcon />} width={48} lines={["Forward"]} />
          </LargeSet>
          <SmallColumn>
            <Small icon={<MeetingIcon />} label="Meeting" />
            <Small icon={<MoreIcon />} label="More" menu />
          </SmallColumn>
        </RibbonGroup>
        <RibbonGroup name="Quick Steps" width={270} launcher>
          <Gallery>
            <GalleryGrid>
              {quickSteps.map(([label, icon]) => (
                <GalleryButton type="button" key={label}>{icon}<span>{label}</span></GalleryButton>
              ))}
            </GalleryGrid>
            <GalleryScroll>
              <GalleryArrow type="button" aria-label="Previous row"><svg width="5" height="4" viewBox="0 0 5 4"><path d="M0 3.500h5L2.500.5z" fill="currentColor" /></svg></GalleryArrow>
              <GalleryArrow type="button" aria-label="Next row"><svg width="5" height="4" viewBox="0 0 5 4"><path d="M0 .5h5L2.500 3.500z" fill="currentColor" /></svg></GalleryArrow>
              <GalleryArrow type="button" aria-label="More quick steps" $active><svg width="7" height="7" viewBox="0 0 7 7"><path d="M0 0h7v1.200H0zM.5 3h6L3.500 6.500z" fill="currentColor" /></svg></GalleryArrow>
            </GalleryScroll>
          </Gallery>
        </RibbonGroup>
        <RibbonGroup name="Move" width={124}>
          <Large icon={<MoveIcon />} width={42} lines={["Move"]} caret="below" />
          <SmallColumn>
            <Small icon={<RulesIcon />} label="Rules" menu />
            <Small icon={<ActionsIcon />} label="Actions" menu />
          </SmallColumn>
        </RibbonGroup>
        <RibbonGroup name="Tags" width={154} launcher>
          <LargeSet>
            <Large icon={<MarkUnreadIcon />} width={44} lines={["Mark", "Unread"]} />
            <Large icon={<CategorizeIcon />} width={59} lines={["Categorize"]} caret="below" />
            <Large icon={<FlagIcon />} width={42} lines={["Follow", "Up"]} caret="inline" />
          </LargeSet>
        </RibbonGroup>
        <RibbonGroup name="Editing" width={134}>
          <Large icon={<TranslateIcon />} width={50} lines={["Translate"]} caret="below" />
          <SmallColumn $tight>
            <Small icon={<FindIcon />} label="Find" />
            <Small icon={<RelatedIcon />} label="Related" menu />
            <Small icon={<SelectIcon />} label="Select" menu />
          </SmallColumn>
        </RibbonGroup>
        <RibbonGroup name="Zoom" width={51}>
          <Large icon={<ZoomIcon />} width={42} lines={["Zoom"]} />
        </RibbonGroup>
      </Ribbon>

      <MessagePane>
        <InfoLine><InfoGlyph size={11} />Extra line breaks in this message were removed.</InfoLine>
        <HeaderRow>
          <HeaderName>From:</HeaderName>
          <span>crm@swiftleisure.co.uk</span>
          <SentInfo><span>Sent:</span><span>Tue 14/04/2015 17:16</span></SentInfo>
        </HeaderRow>
        <HeaderRow><HeaderName>To:</HeaderName><span>Karen Watson</span></HeaderRow>
        <HeaderRow><HeaderName>Cc:</HeaderName></HeaderRow>
        <HeaderRow><HeaderName>Subject:</HeaderName><span>{"Swift Customer Reference:[337994\\549273\\4252492\\222]"}</span></HeaderRow>
        <AttachmentBar>
          <MessageChip type="button"><MailGlyph />Message</MessageChip>
          <FileChip type="button"><ChromeGlyph size={14} />2890161.htm (6 KB)</FileChip>
        </AttachmentBar>

        <Viewer>
          <Mail>
            {address.map((l) => <Line key={l}>{l}</Line>)}
            <Line />
            <Line>Direct Dial Tel:</Line>
            <Line><Cell $width={48}>e-mail:</Cell><MailLink href="mailto:enquiries@swiftleisure.co.uk">enquiries@swiftleisure.co.uk</MailLink></Line>
            <Line />
            <Line />
            <Line><Cell $width={48}>To:</Cell><Cell $width={144}>Surf Bay Leisure</Cell>From: Rea Azzi</Line>
            <Line><Cell $width={51}>FAO:</Cell><Cell $width={285}>Surf Bay Leisure Ltd</Cell><Cell $width={42}>Date:</Cell>13/04/2015</Line>
            <Line />
            <Line>Our Ref: **/018386H</Line>
            <Line />
            <Line>{"2015 HHOME Loire 35x10/3b "}<Selected>018386H</Selected></Line>
            <Line />
            <Line>Hi Karen,</Line>
            <Line />
            <Line>I have referred this over to Eltheringtons for their opinion, this will not appear on Connect, I will keep you informed.</Line>
            <Line />
            <Line>Thank you</Line>
            <Line />
            <Line />
            <Line>Kind Regards</Line>
            <Line />
            <Line>Rea Azzi</Line>
            <Line>Holiday Homes Services Advisor</Line>
          </Mail>
          <ScrollBar>
            <ScrollTools>
              <SplitHandle />
              <svg width="13" height="12" viewBox="0 0 13 12"><path d="M.5 2.500h12v7H.5z" fill="#f4f5f7" stroke="#6d7580" /><path d="M3 .5 5 3 3 5.500 1 3zM9 6l2.500 3L9 11.500 6.500 9z" fill="#fff" stroke="#6d7580" /></svg>
            </ScrollTools>
            <ScrollButton type="button" aria-label="Scroll up"><svg width="9" height="5" viewBox="0 0 9 5"><path d="M0 5h9L4.500 0z" fill="#3f4a63" /></svg></ScrollButton>
            <ScrollTrack>
              <ScrollThumb><svg width="8" height="8" viewBox="0 0 8 8"><path d="M0 .5h8M0 2.500h8M0 4.500h8M0 6.500h8" stroke="#90969e" /></svg></ScrollThumb>
              <ScrollRest />
            </ScrollTrack>
            <ScrollButton type="button" aria-label="Scroll down"><svg width="9" height="5" viewBox="0 0 9 5"><path d="M0 0h9L4.500 5z" fill="#3f4a63" /></svg></ScrollButton>
          </ScrollBar>
        </Viewer>
        <PeopleSplitter />
      </MessagePane>

      <StatusBar>
        <InfoGlyph size={16} />
        <StatusText>Update available for: Facebook.</StatusText>
        <People>
          <Avatar type="button" aria-label="Sender"><Person /></Avatar>
          <Avatar type="button" aria-label="Recipient"><Person /></Avatar>
          <ExpandButton type="button" aria-label="Expand people pane">
            <svg width="8" height="6" viewBox="0 0 8 6"><path d="M1 5 4 1.500 7 5" fill="none" stroke="#222" strokeWidth="2" /></svg>
          </ExpandButton>
        </People>
      </StatusBar>

      <Taskbar>
        <Wallpaper viewBox="0 0 1920 38" preserveAspectRatio="none" aria-hidden="true">
          <path d="M60 38 130 0h60L110 38zM620 0h20L655 38H640z" fill="#fff" opacity=".12" />
          <path d="M700 38 815 0h35L740 38zM955 0h85L1065 38H975zM1220 0H1300L1350 38H1250z" fill="#fff" opacity=".1" />
          <path d="M640 8Q800 30 1000 4" fill="none" stroke="#8fd0f0" strokeWidth="4" opacity=".25" />
          <path d="M1300 0h26Q1352 14 1384 38H1358Q1334 14 1300 0z" fill="#7db8ee" opacity=".5" />
          <path d="M1306 0h14Q1348 15 1376 38H1364Q1340 15 1306 0z" fill="#b5d8f8" opacity=".9" />
        </Wallpaper>
        <Launchers>
          <StartButton type="button" aria-label="Start"><StartOrb /></StartButton>
          <Launcher type="button" aria-label="Internet Explorer"><IeGlyph /></Launcher>
          <Launcher type="button" aria-label="Windows Explorer"><ExplorerGlyph /></Launcher>
          <Launcher type="button" aria-label="Chrome" $open><ChromeGlyph size={30} /></Launcher>
          <Launcher type="button" aria-label="Jira" $open><JiraGlyph /></Launcher>
          <Stack><Launcher type="button" aria-label="Outlook" $open $active><OutlookGlyph /></Launcher></Stack>
          <Launcher type="button" aria-label="Sage" $open><SageGlyph /></Launcher>
          <Launcher type="button" aria-label="Bookings" $open><GridGlyph /></Launcher>
        </Launchers>
        <Tray>
          <TrayButton type="button" aria-label="Show hidden icons"><svg width="8" height="4" viewBox="0 0 8 4"><path d="M0 4h8L4 0z" fill="#fff" /></svg></TrayButton>
          <TrayButton type="button" aria-label="Status"><svg width="16" height="16" viewBox="0 0 16 16"><circle cx="8" cy="8" r="7.300" fill="url(#green)" /></svg></TrayButton>
          <TrayButton type="button" aria-label="Action Center"><svg width="16" height="16" viewBox="0 0 16 16"><path d="M1 1h1.500v14H1zM3.500 2H9v2h5.500L12 9H8V8H3.500z" fill="#fff" /></svg></TrayButton>
          <TrayButton type="button" aria-label="Network"><svg width="16" height="16" viewBox="0 0 16 16"><path d="M6 4.500h8.500v7H5V8" fill="none" stroke="#fff" strokeWidth="1.400" /><path d="M6 14.500h8M10 12v2M2 1v3M4.500 1v3M1 4h4.500v2.500H1zM3.200 6v8" fill="none" stroke="#fff" strokeWidth="1.300" /></svg></TrayButton>
          <TrayButton type="button" aria-label="Volume"><svg width="16" height="16" viewBox="0 0 16 16"><path d="M1 5.500h3L8 1.500v13L4 10.500H1z" fill="#fff" /><path d="M10 6q1.500 2 0 4M12 4.500q2.500 3.500 0 7M14 3q3 5 0 10" fill="none" stroke="#e7eef6" /></svg></TrayButton>
          <Clock>15:24<br />17/04/2015</Clock>
          <ShowDesktop type="button" aria-label="Show desktop" />
        </Tray>
      </Taskbar>
    </Screen>
  );
}
